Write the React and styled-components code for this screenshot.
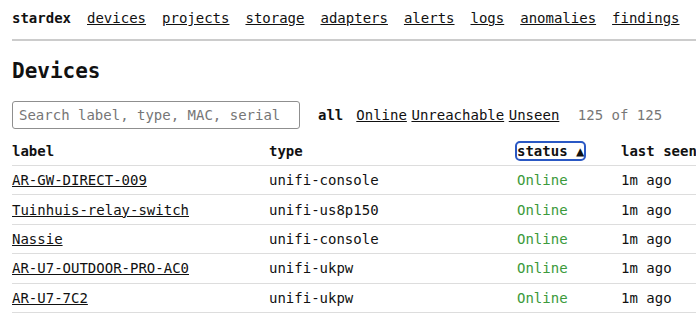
import React from "react";
import styled, { createGlobalStyle } from "styled-components";

const Global = createGlobalStyle`
  html, body { margin: 0; padding: 0; overflow: hidden; background: #fff; }
  body {
    font-family: "DejaVu Sans Mono", monospace;
    font-size: 14px;
    color: #111;
  }
`;

const Page = styled.div`
  width: max-content;
  min-width: 100%;
  box-sizing: border-box;
  padding: 10px 0 0 12px;
`;

const Nav = styled.nav`
  display: flex;
  gap: 16px;
  white-space: nowrap;
  padding-bottom: 13px;
  border-bottom: 2px solid #cccccc;
`;

const Brand = styled.span`
  font-weight: bold;
`;

const NavLink = styled.a`
  color: #111;
  text-decoration: underline;
`;

const Title = styled.h1`
  font-size: 21px;
  font-weight: bold;
  margin: 18px 0 0;
  line-height: normal;
`;

const Toolbar = styled.div`
  display: flex;
  align-items: center;
  margin-top: 18px;
`;

const Search = styled.input`
  box-sizing: border-box;
  width: 288px;
  height: 28px;
  padding: 0 6px;
  border: 1px solid #8f8f8f;
  border-radius: 3px;
  font-family: inherit;
  font-size: 14px;
  color: #111;
  &::placeholder { color: #767676; }
  &:focus { outline: none; }
`;

const Filters = styled.div`
  display: flex;
  align-items: center;
  gap: 4.6px;
  margin-left: 18px;
`;

const Filter = styled.a`
  color: #111;
  font-weight: ${(p) => (p.$active ? "bold" : "normal")};
  text-decoration: ${(p) => (p.$active ? "none" : "underline")};
  margin-right: ${(p) => (p.$active ? "8.4px" : "0")};
`;

const Count = styled.span`
  color: #777;
  margin-left: 18.5px;
`;

const Table = styled.table`
  margin-top: 8px;
  border-collapse: collapse;
  table-layout: fixed;
  width: 800px;
`;

const Th = styled.th`
  text-align: left;
  font-weight: bold;
  padding: 6px 0;
  width: ${(p) => p.$w}px;
  border-bottom: 1px solid #dddddd;
`;

const Td = styled.td`
  padding: 6.2px 0;
  border-bottom: 1px solid #dddddd;
  white-space: nowrap;
  color: ${(p) => (p.$status ? "#3b9a3b" : "#111")};
`;

const RowLink = styled.a`
  color: #111;
  text-decoration: underline;
`;

const SortButton = styled.button`
  font: inherit;
  font-weight: bold;
  color: #111;
  background: none;
  border: none;
  padding: 0;
  margin: 0;
  border-radius: 3px;
  outline: 2px solid #2a58c4;
  outline-offset: 0;
  cursor: pointer;
`;

const navItems = [
  "devices",
  "projects",
  "storage",
  "adapters",
  "alerts",
  "logs",
  "anomalies",
  "findings",
  "jobs",
];

const rows = [
  ["AR-GW-DIRECT-009", "unifi-console"],
  ["Tuinhuis-relay-switch", "unifi-us8p150"],
  ["Nassie", "unifi-console"],
  ["AR-U7-OUTDOOR-PRO-AC0", "unifi-ukpw"],
  ["AR-U7-7C2", "unifi-ukpw"],
];

export default function App() {
  return (
    <>
      <Global />
      <Page>
        <Nav>
          <Brand>stardex</Brand>
          {navItems.map((n) => (
            <NavLink key={n} href="#">
              {n}
            </NavLink>
          ))}
        </Nav>
        <Title>Devices</Title>
        <Toolbar>
          <Search placeholder="Search label, type, MAC, serial" />
          <Filters>
            <Filter $active>all</Filter>
            <Filter href="#">Online</Filter>
            <Filter href="#">Unreachable</Filter>
            <Filter href="#">Unseen</Filter>
          </Filters>
          <Count>125 of 125</Count>
        </Toolbar>
        <Table>
          <thead>
            <tr>
              <Th $w={257}>label</Th>
              <Th $w={248}>type</Th>
              <Th $w={104}>
                <SortButton>status ▲</SortButton>
              </Th>
              <Th $w={191}>last seen</Th>
            </tr>
          </thead>
          <tbody>
            {rows.map(([label, type]) => (
              <tr key={label}>
                <Td>
                  <RowLink href="#">{label}</RowLink>
                </Td>
                <Td>{type}</Td>
                <Td $status>Online</Td>
                <Td>1m ago</Td>
              </tr>
            ))}
          </tbody>
        </Table>
      </Page>
    </>
  );
}
